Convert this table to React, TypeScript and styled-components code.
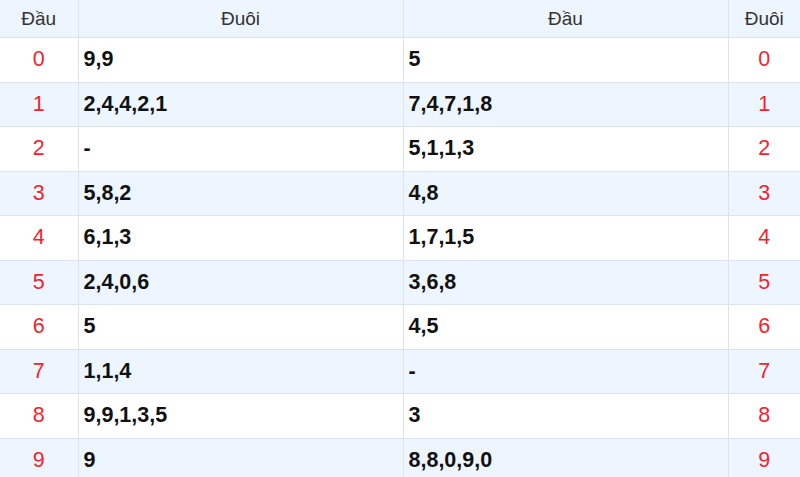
import styled, { createGlobalStyle } from "styled-components";

const ROWS = [
	{ d: "0", tail: "9,9", head: "5" },
	{ d: "1", tail: "2,4,4,2,1", head: "7,4,7,1,8" },
	{ d: "2", tail: "-", head: "5,1,1,3" },
	{ d: "3", tail: "5,8,2", head: "4,8" },
	{ d: "4", tail: "6,1,3", head: "1,7,1,5" },
	{ d: "5", tail: "2,4,0,6", head: "3,6,8" },
	{ d: "6", tail: "5", head: "4,5" },
	{ d: "7", tail: "1,1,4", head: "-" },
	{ d: "8", tail: "9,9,1,3,5", head: "3" },
	{ d: "9", tail: "9", head: "8,8,0,9,0" }
];

const GlobalStyle = createGlobalStyle`
	body {
		margin: 0;
		background: #fff;
		font-family: "Liberation Sans", Arial, sans-serif;
	}
`;

export default function App() {
	return (
		<>
			<GlobalStyle />
			<LotoTable>
				<colgroup>
					<col style={{ width: 78 }} />
					<col style={{ width: 325 }} />
					<col style={{ width: 325 }} />
					<col />
				</colgroup>
				<thead>
					<tr>
						<HeadCell>Đầu</HeadCell>
						<HeadCell>Đuôi</HeadCell>
						<HeadCell>Đầu</HeadCell>
						<HeadCell>Đuôi</HeadCell>
					</tr>
				</thead>
				<tbody>
					{ROWS.map((row, i) => (
						<Row key={row.d} striped={i % 2 === 1}>
							<DigitCell>{row.d}</DigitCell>
							<ValueCell>{row.tail}</ValueCell>
							<ValueCell>{row.head}</ValueCell>
							<DigitCell>{row.d}</DigitCell>
						</Row>
					))}
				</tbody>
			</LotoTable>
		</>
	);
}

const LotoTable = styled.table`
	width: 800px;
	border-collapse: collapse;
	table-layout: fixed;
`;

const HeadCell = styled.th`
	height: 37px;
	padding: 0 6px;
	background: #edf5fe;
	border: 1px solid #dce3ea;
	border-top: none;
	font-size: 19px;
	font-weight: 400;
	color: #333;
	text-align: center;

	&:first-child {
		border-left: none;
	}
	&:last-child {
		border-right: none;
	}
`;

const Row = styled.tr<{ striped: boolean }>`
	height: 44.5px;
	background: ${(props) => (props.striped ? "#edf5fe" : "#fff")};
`;

const DigitCell = styled.td`
	padding: 0 6px;
	border: 1px solid #dce3ea;
	font-size: 21.5px;
	color: #f5222d;
	text-align: center;

	&:first-child {
		border-left: none;
	}
	&:last-child {
		border-right: none;
	}
`;

const ValueCell = styled.td`
	padding: 0 5px;
	border: 1px solid #dce3ea;
	font-size: 21.5px;
	font-weight: 700;
	color: #111;
	text-align: left;
`;
